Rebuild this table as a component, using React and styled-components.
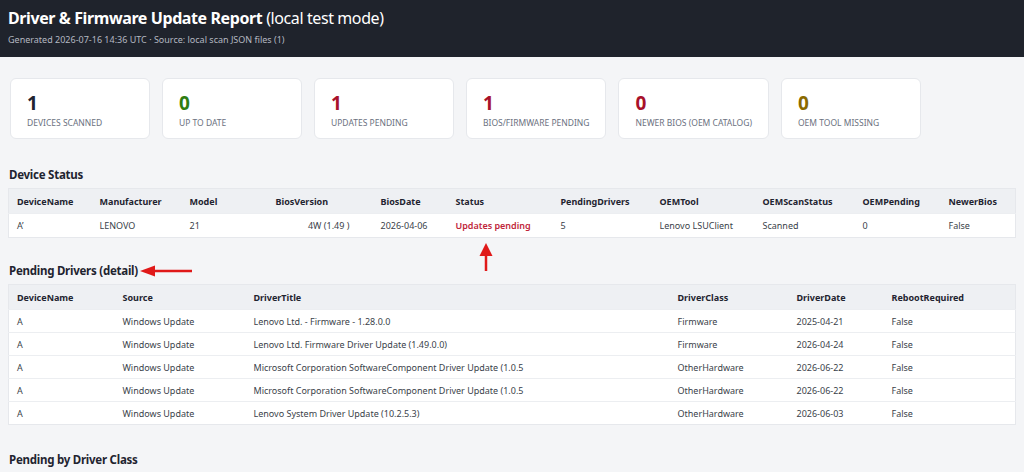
import styled, { createGlobalStyle } from "styled-components";

const Global = createGlobalStyle`
  html, body { margin: 0; padding: 0; }
  body {
    background: #f4f5f7;
    font-family: "Noto Sans", "Open Sans", sans-serif;
    color: #1f2430;
  }
`

const Header = styled.header`
  background: #1f232c;
  color: #fff;
  padding: 6px 8px 0;
  height: 51px;
`

const Title = styled.h1`
  margin: 0;
  font-size: 16px;
  font-weight: 700;
  line-height: 24px;
  letter-spacing: -0.4px;
  span { font-weight: 400; }
`

const Sub = styled.div`
  font-size: 9px;
  color: #b4b8c1;
  margin-top: 3px;
`

const Main = styled.main`
  padding: 21px 8px 0;
  position: relative;
`

const Cards = styled.div`
  display: flex;
  gap: 12px;
  padding-left: 2px;
`

const Card = styled.div`
  background: #fff;
  border: 1px solid #e6e8ec;
  border-radius: 6px;
  min-width: 106px;
  height: 39px;
  padding: 12px 16px 8px;
`

const Num = styled.div`
  font-size: 19px;
  font-weight: 700;
  line-height: 24px;
  color: ${(p) => p.color};
`

const Label = styled.div`
  font-size: 8.5px;
  color: #6b7180;
  text-transform: uppercase;
  margin-top: 2px;
  white-space: nowrap;
`

const H2 = styled.h2`
  margin: ${(p) => p.top}px 0 5px 1px;
  font-size: 11.5px;
  font-weight: 700;
  line-height: 16px;
  letter-spacing: -0.25px;
`

const Table = styled.table`
  width: 100%;
  border-collapse: collapse;
  background: #fff;
  border: 1px solid #e6e8ec;
  font-size: 9px;
  th, td {
    text-align: left;
    padding: 0 8px;
    white-space: nowrap;
  }
  th {
    background: #eef0f3;
    font-weight: 700;
    height: 24px;
    color: #1f2430;
  }
  td {
    height: ${(p) => p.rowH}px;
    color: #3a3f4a;
    border-top: 1px solid #eceef1;
  }
`

const Status = styled.span`
  color: #c0263a;
  font-weight: 600;
`

const Hidden = styled.span`
  color: transparent;
`

const ArrowBox = styled.svg`
  position: absolute;
`

const cards = [
  ["1", "Devices scanned", "#1f2430"],
  ["0", "Up to date", "#2f7d12"],
  ["1", "Updates pending", "#a8112a"],
  ["1", "BIOS/Firmware pending", "#a8112a"],
  ["0", "Newer BIOS (OEM catalog)", "#a8112a"],
  ["0", "OEM tool missing", "#8a6a00"],
];

const devCols = [
  ["DeviceName", 83], ["Manufacturer", 90], ["Model", 86], ["BiosVersion", 105],
  ["BiosDate", 75], ["Status", 105], ["PendingDrivers", 99], ["OEMTool", 103],
  ["OEMScanStatus", 100], ["OEMPending", 86], ["NewerBios", 0],
];

const drvCols = [
  ["DeviceName", 106], ["Source", 131], ["DriverTitle", 424], ["DriverClass", 119],
  ["DriverDate", 95], ["RebootRequired", 0],
];

const drivers = [
  ["Lenovo Ltd. - Firmware - 1.28.0.0", "Firmware", "2025-04-21"],
  ["Lenovo Ltd. Firmware Driver Update (1.49.0.0)", "Firmware", "2026-04-24"],
  ["Microsoft Corporation SoftwareComponent Driver Update (1.0.5", "OtherHardware", "2026-06-22"],
  ["Microsoft Corporation SoftwareComponent Driver Update (1.0.5", "OtherHardware", "2026-06-22"],
  ["Lenovo System Driver Update (10.2.5.3)", "OtherHardware", "2026-06-03"],
];

export default function App() {
  return (
    <>
      <Global />
      <Header>
        <Title>Driver &amp; Firmware Update Report <span>(local test mode)</span></Title>
        <Sub>Generated 2026-07-16 14:36 UTC · Source: local scan JSON files (1)</Sub>
      </Header>
      <Main>
        <Cards>
          {cards.map(([n, l, c]) => (
            <Card key={l}>
              <Num color={c}>{n}</Num>
              <Label>{l}</Label>
            </Card>
          ))}
        </Cards>

        <H2 top={28}>Device Status</H2>
        <Table rowH={23}>
          <colgroup>
            {devCols.map(([k, w]) => <col key={k} style={w ? { width: w } : undefined} />)}
          </colgroup>
          <thead>
            <tr>{devCols.map(([k]) => <th key={k}>{k}</th>)}</tr>
          </thead>
          <tbody>
            <tr>
              <td>A’</td>
              <td>LENOVO</td>
              <td>21</td>
              <td><Hidden>N3XET5</Hidden>4W (1.49 )</td>
              <td>2026-04-06</td>
              <td><Status>Updates pending</Status></td>
              <td>5</td>
              <td>Lenovo LSUClient</td>
              <td>Scanned</td>
              <td>0</td>
              <td>False</td>
            </tr>
          </tbody>
        </Table>

        <H2 top={25}>Pending Drivers (detail)</H2>
        <Table rowH={22}>
          <colgroup>
            {drvCols.map(([k, w]) => <col key={k} style={w ? { width: w } : undefined} />)}
          </colgroup>
          <thead>
            <tr>{drvCols.map(([k]) => <th key={k}>{k}</th>)}</tr>
          </thead>
          <tbody>
            {drivers.map(([t, c, d], i) => (
              <tr key={i}>
                <td>A</td>
                <td>Windows Update</td>
                <td>{t}</td>
                <td>{c}</td>
                <td>{d}</td>
                <td>False</td>
              </tr>
            ))}
          </tbody>
        </Table>

        <H2 top={27}>Pending by Driver Class</H2>

        <ArrowBox width="56" height="14" viewBox="0 0 56 14" style={{ left: 138, top: 207 }}>
          <path d="M16 7H54" stroke="#e01919" strokeWidth="2.5" />
          <path d="M2 7L17 1.5V12.5Z" fill="#e01919" />
        </ArrowBox>
        <ArrowBox width="16" height="30" viewBox="0 0 16 30" style={{ left: 478, top: 185 }}>
          <path d="M8 12V29" stroke="#e01919" strokeWidth="2.5" />
          <path d="M8 1L1.5 14H14.5Z" fill="#e01919" />
        </ArrowBox>
      </Main>
    </>
  );
}
